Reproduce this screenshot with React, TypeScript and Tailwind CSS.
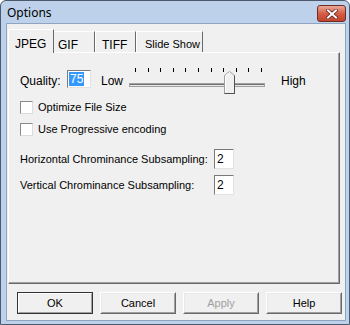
import React from "react";

const font = { fontFamily: '"Liberation Sans", Arial, sans-serif' };

function Slider() {
  const ticks = [];
  for (let i = 0; i < 11; i++) ticks.push(6 + i * 12.6);
  return (
    <svg width="140" height="28" viewBox="0 0 140 28" className="block">
      {ticks.map((x, i) => (
        <line key={i} x1={Math.round(x) + 0.5} y1="2" x2={Math.round(x) + 0.5} y2="6" stroke="#000" strokeWidth="1" />
      ))}
      <rect x="0.5" y="17.5" width="135" height="3" fill="#e8e8e8" stroke="#a0a0a0" />
      <line x1="1" y1="18.5" x2="135" y2="18.5" stroke="#707070" />
      <path d="M95.5 27.5 V9.5 L100.5 5.5 L105.5 9.5 V27.5 Z" fill="#f0f0f0" stroke="#a0a0a0" />
      <path d="M105.5 9.5 V27.5 H95.5" fill="none" stroke="#505050" />
      <path d="M96.5 26 V10 L100.5 6.8" fill="none" stroke="#ffffff" />
    </svg>
  );
}

function Checkbox({ label }: { label: string }) {
  return (
    <div className="flex items-center h-[13px]">
      <div className="w-[13px] h-[13px] bg-white border border-t-[#8a8a8a] border-l-[#8a8a8a] border-r-[#dcdcdc] border-b-[#dcdcdc]" />
      <span className="ml-[5px] text-[11px] text-black leading-none whitespace-nowrap">{label}</span>
    </div>
  );
}

function Field({ value, width }: { value: string; width: string }) {
  return (
    <div className={`${width} h-[20px] bg-white border border-t-[#7a7a7a] border-l-[#7a7a7a] border-r-[#e3e3e3] border-b-[#e3e3e3] flex items-center pl-[2px] text-[12px] text-black`}>
      {value}
    </div>
  );
}

function Btn({ label, def, disabled }: { label: string; def?: boolean; disabled?: boolean }) {
  return (
    <div
      className={`w-[76px] h-[22px] flex items-center justify-center text-[11px] bg-[#f0f0f0] border ${
        def ? "border-[#333333]" : "border-t-[#ffffff] border-l-[#ffffff] border-r-[#6a6a6a] border-b-[#6a6a6a]"
      } ${disabled ? "text-[#a0a0a0]" : "text-black"}`}
    >
      <div
        className={`w-full h-full flex items-center justify-center border ${
          def
            ? "border-t-[#ffffff] border-l-[#ffffff] border-r-[#a0a0a0] border-b-[#a0a0a0]"
            : "border-t-[#e8e8e8] border-l-[#e8e8e8] border-r-[#a0a0a0] border-b-[#a0a0a0]"
        }`}
      >
        {label}
      </div>
    </div>
  );
}

export default function App() {
  return (
    <div style={font} className="w-[350px] h-[325px] bg-[#bdd2ea] border border-[#4c5a6e] rounded-t-[6px] flex flex-col overflow-hidden">
      {/* title bar */}
      <div className="h-[22px] flex items-center justify-between pl-[6px] pr-[3px]">
        <span style={{ fontFamily: '"Noto Sans", "Open Sans", sans-serif' }} className="text-[12px] text-black mt-[2px]">
          Options
        </span>
        <div className="w-[29px] h-[17px] mt-[3px] rounded-[3px] border border-[#6e2b22] bg-gradient-to-b from-[#e9a897] via-[#d45e47] to-[#c0442d] flex items-center justify-center">
          <svg width="12" height="10" viewBox="0 0 12 10">
            <path d="M2 1.5 L10 8.5 M10 1.5 L2 8.5" stroke="#5a1a12" strokeWidth="3.4" strokeLinecap="square" />
            <path d="M2 1.5 L10 8.5 M10 1.5 L2 8.5" stroke="#ffffff" strokeWidth="2" strokeLinecap="square" />
          </svg>
        </div>
      </div>

      {/* client area */}
      <div className="ml-[5px] mr-[3px] mb-[3px] flex-1 bg-[#f0f0f0] border border-[#8ea4c0] flex flex-col pl-[1px] pr-[3px] pt-[5px]">
        {/* tabs */}
        <div className="flex items-end h-[23px] relative z-10 text-[12px] text-black whitespace-nowrap">
          <div className="w-[46px] h-[24px] -mb-[1px] bg-[#f0f0f0] border-t border-l border-t-[#ffffff] border-l-[#ffffff] border-r border-r-[#696969] flex items-start pl-[6px] pt-[5px]">
            JPEG
          </div>
          <div className="w-[41px] h-[21px] bg-[#f0f0f0] border-t border-t-[#ffffff] border-r border-r-[#696969] flex items-start pl-[4px] pt-[4px]">
            GIF
          </div>
          <div className="w-[41px] h-[21px] bg-[#f0f0f0] border-t border-t-[#ffffff] border-l border-l-[#ffffff] border-r border-r-[#696969] flex items-start pl-[6px] pt-[4px]">
            TIFF
          </div>
          <div className="w-[67px] h-[21px] bg-[#f0f0f0] border-t border-t-[#ffffff] border-l border-l-[#ffffff] border-r border-r-[#696969] flex items-start pl-[8px] pt-[4px] text-[11px]">
            Slide Show
          </div>
        </div>

        {/* panel */}
        <div className="w-[332px] h-[232px] border border-t-[#ffffff] border-l-[#ffffff] border-r-[#696969] border-b-[#696969]">
          <div className="w-full h-full border-r border-b border-r-[#a0a0a0] border-b-[#a0a0a0] flex flex-col pl-[11px] pt-[13px]">
            {/* quality row */}
            <div className="flex items-start h-[28px] text-[12px] text-black">
              <span className="w-[47px] mt-[6px]">Quality:</span>
              <div className="w-[24px] h-[18px] mt-[4px] bg-white border border-t-[#7a7a7a] border-l-[#7a7a7a] border-r-[#e3e3e3] border-b-[#e3e3e3] flex items-center pl-[1px]">
                <span className="bg-[#3399ff] text-white leading-[14px] px-[1px]">75</span>
              </div>
              <span className="ml-[10px] w-[28px] mt-[6px]">Low</span>
              <Slider />
              <span className="ml-[12px] mt-[6px]">High</span>
            </div>

            <div className="mt-[7px] flex flex-col gap-[9px]">
              <Checkbox label="Optimize File Size" />
              <Checkbox label="Use Progressive encoding" />
            </div>

            <div className="mt-[13px] flex flex-col gap-[6px] text-[11px] text-black">
              <div className="flex items-center">
                <span className="w-[194px] whitespace-nowrap">Horizontal Chrominance Subsampling:</span>
                <Field value="2" width="w-[20px]" />
              </div>
              <div className="flex items-center">
                <span className="w-[194px] whitespace-nowrap">Vertical Chrominance Subsampling:</span>
                <Field value="2" width="w-[20px]" />
              </div>
            </div>
          </div>
        </div>

        {/* buttons */}
        <div className="flex gap-[7px] mt-[8px] pl-[9px]">
          <Btn label="OK" def />
          <Btn label="Cancel" />
          <Btn label="Apply" disabled />
          <Btn label="Help" />
        </div>
      </div>
    </div>
  );
}
